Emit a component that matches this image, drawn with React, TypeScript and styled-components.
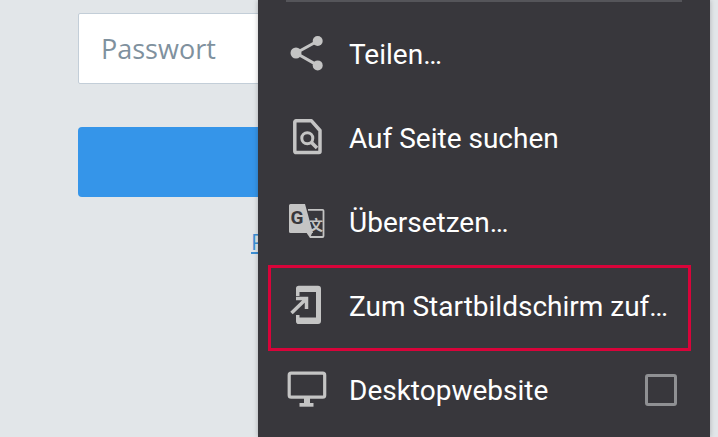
import React from 'react';
import styled, { createGlobalStyle } from 'styled-components';

const GlobalStyle = createGlobalStyle`
  html, body {
    margin: 0;
    padding: 0;
    background: #e2e6e9;
    overflow: hidden;
  }
  * {
    box-sizing: border-box;
  }
`;

const Screen = styled.div`
  display: flex;
  width: 718px;
  height: 437px;
  overflow: hidden;
  background: #e2e6e9;
`;
const LoginForm = styled.div`
  width: 258px;
  flex-shrink: 0;
  padding: 13px 0 0 78px;
  overflow: hidden;
`;
const PasswordInput = styled.input`
  display: block;
  width: 400px;
  height: 71px;
  padding: 0 22px;
  border: 1px solid #c3ced8;
  border-radius: 2px;
  background: #fff;
  font-family: "Open Sans", sans-serif;
  font-size: 27px;
  outline: none;
  &::placeholder {
    color: #7f919e;
    opacity: 1;
  }
`;
const SubmitButton = styled.button`
  display: block;
  width: 400px;
  height: 70px;
  margin-top: 43px;
  border: 0;
  border-radius: 4px;
  background: #3595e9;
`;
const ForgotLink = styled.a`
  display: block;
  width: 400px;
  margin: 29px 0 0 173px;
  color: #3c8fd4;
  font-family: "Open Sans", sans-serif;
  font-size: 22px;
  line-height: 30px;
  text-decoration: underline;
  white-space: nowrap;
`;
const Menu = styled.div`
  width: 452px;
  height: 437px;
  flex-shrink: 0;
  padding-bottom: 10px;
  background: #38373c;
  box-shadow: 0 0 5px rgba(0, 0, 0, 0.25);
  font-family: Roboto, sans-serif;
`;
const Divider = styled.div`
  height: 2px;
  margin: 0 28px 10px;
  background: #55555a;
`;
const Row = styled.div<{ $marked?: boolean }>`
  position: relative;
  display: flex;
  align-items: center;
  height: 84px;
  padding: 0 33px 0 27px;
  color: #fff;
  font-size: 28px;
  ${(p) =>
    p.$marked &&
    `
    &::after {
      content: '';
      position: absolute;
      top: 1px;
      bottom: -3px;
      left: 10px;
      right: 19px;
      border: 3px solid #d8043a;
    }
  `}
`;
const IconSlot = styled.svg`
  width: 44px;
  height: 44px;
  flex-shrink: 0;
  margin-right: 20px;
`;
const Label = styled.span`
  flex: 1;
  white-space: nowrap;
`;
const Checkbox = styled.span`
  width: 32px;
  height: 32px;
  border: 3px solid #8f9093;
  border-radius: 3px;
`;

const iconColor = '#c4c4c4';

const ShareIcon = () => (
  <IconSlot viewBox="0 0 44 44">
    <path d="M32.7 9 11 21 32.700 33.400" fill="none" stroke={iconColor} strokeWidth="3" />
    <circle cx="32.7" cy="9" r="5" fill={iconColor} />
    <circle cx="11" cy="21" r="5.5" fill={iconColor} />
    <circle cx="32.7" cy="33.4" r="5" fill={iconColor} />
  </IconSlot>
);

const FindIcon = () => (
  <IconSlot viewBox="0 0 44 44">
    <path
      d="M11 4.800h15.500L35 14.500V35.500a1 1 0 0 1-1 1H11a1.200 1.200 0 0 1-1.200-1.200V6a1.200 1.200 0 0 1 1.200-1.200Z"
      fill="none"
      stroke={iconColor}
      strokeWidth="3.500"
      strokeLinejoin="round"
    />
    <circle cx="22.3" cy="22.3" r="5.500" fill="none" stroke={iconColor} strokeWidth="3" />
    <path d="M26.500 26.500 32 32" stroke={iconColor} strokeWidth="3.500" />
  </IconSlot>
);

const TranslateIcon = () => (
  <IconSlot viewBox="0 0 44 44">
    <path
      d="M23 9.800h14.500a1 1 0 0 1 1 1V36a1 1 0 0 1-1 1H25"
      fill="none"
      stroke={iconColor}
      strokeWidth="1.800"
    />
    <path d="M5.500 4H20L28 33H5.500A1.500 1.500 0 0 1 4 31.500V5.500A1.500 1.500 0 0 1 5.500 4Z" fill={iconColor} />
    <path d="M21 32h6.500l-2.500 6Z" fill={iconColor} />
    <text x="5.500" y="24" fill="#38373c" fontFamily="Roboto, sans-serif" fontSize="19" fontWeight="700">
      G
    </text>
    <text x="24" y="30" fill={iconColor} fontFamily='"Noto Sans CJK SC", sans-serif' fontSize="14" fontWeight="700">
      文
    </text>
  </IconSlot>
);

const AddHomeIcon = () => (
  <IconSlot viewBox="0 0 44 44">
    <path
      d="M11 12V4.500A2.800 2.800 0 0 1 13.800 1.700H33A3 3 0 0 1 36 4.700V37A3 3 0 0 1 33 40H13.800A2.800 2.800 0 0 1 11 37.200V31h3.500v2.500H31V8H14.500v4Z"
      fill={iconColor}
    />
    <path d="M6.500 29 21 15M11 14.500H21.500V25" fill="none" stroke={iconColor} strokeWidth="3.500" />
  </IconSlot>
);

const DesktopIcon = () => (
  <IconSlot viewBox="0 0 44 44">
    <rect x="4.200" y="5.200" width="35.500" height="24" rx="2" fill="none" stroke={iconColor} strokeWidth="3.200" />
    <path d="M19 30h6v5h-6Z" fill={iconColor} />
    <rect x="14.500" y="35" width="14" height="3.700" fill={iconColor} />
  </IconSlot>
);

const App = () => {
  return (
    <Screen>
      <GlobalStyle />
      <LoginForm>
        <PasswordInput type="password" placeholder="Passwort" />
        <SubmitButton type="button" />
        <ForgotLink href="#">Passwort vergessen?</ForgotLink>
      </LoginForm>
      <Menu>
        <Divider />
        <Row>
          <ShareIcon />
          <Label>Teilen…</Label>
        </Row>
        <Row>
          <FindIcon />
          <Label>Auf Seite suchen</Label>
        </Row>
        <Row>
          <TranslateIcon />
          <Label>Übersetzen…</Label>
        </Row>
        <Row $marked>
          <AddHomeIcon />
          <Label>Zum Startbildschirm zuf…</Label>
        </Row>
        <Row>
          <DesktopIcon />
          <Label>Desktopwebsite</Label>
          <Checkbox />
        </Row>
      </Menu>
    </Screen>
  );
};

export default App;
